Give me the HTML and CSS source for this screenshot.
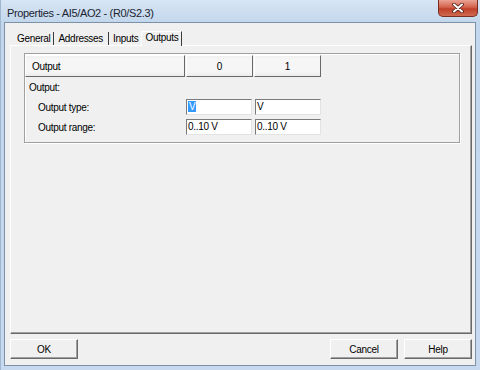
FILE: index.html
```html
<!DOCTYPE html>
<html lang="en">

<head>
  <meta charset="UTF-8">
  <title>Properties - AI5/AO2 - (R0/S2.3)</title>
  <link rel="stylesheet" href="styles.css">
</head>

<body>
  <div class="window">
    <div class="titlebar">
      <span class="title">Properties - AI5/AO2 - (R0/S2.3)</span>
      <button class="close" aria-label="Close">
        <svg width="12" height="10" viewBox="0 0 12 10">
          <path d="M2 1.5 L10 8.5 M10 1.5 L2 8.5" stroke="#4a1a12" stroke-width="3.6" stroke-linecap="round" />
          <path d="M2 1.5 L10 8.5 M10 1.5 L2 8.5" stroke="#fff" stroke-width="2" stroke-linecap="round" />
        </svg>
      </button>
    </div>

    <div class="client">
      <div class="tabs">
        <span class="tab">General</span>
        <span class="tab">Addresses</span>
        <span class="tab">Inputs</span>
        <span class="tab active">Outputs</span>
      </div>

      <div class="panel">
        <div class="group">
          <div class="head">
            <div class="hcell name">Output</div>
            <div class="hcell">0</div>
            <div class="hcell">1</div>
          </div>
          <div class="section">Output:</div>
          <div class="row">
            <span class="label">Output type:</span>
            <div class="field"><span class="selected">V</span></div>
            <div class="field">V</div>
          </div>
          <div class="row">
            <span class="label">Output range:</span>
            <div class="field">0..10 V</div>
            <div class="field">0..10 V</div>
          </div>
        </div>
      </div>

      <div class="buttons">
        <button class="btn">OK</button>
        <span class="spacer"></span>
        <button class="btn">Cancel</button>
        <button class="btn">Help</button>
      </div>
    </div>
  </div>
</body>

</html>
```

FILE: styles.css
```css
body {
  margin: 0;
  font-family: 'Liberation Sans', Arial, sans-serif;
  font-size: 10px;
  letter-spacing: -0.3px;
  color: #000;
}

/* window frame, aero style */
.window {
  width: 480px;
  height: 370px;
  box-sizing: border-box;
  display: flex;
  flex-direction: column;
  background: linear-gradient(to bottom, #d7e5f4 0px, #c3d7ec 22px, #c6d9ee 100%);
  border-left: 1px solid #9fb7d1;
}

.titlebar {
  height: 22px;
  display: flex;
  align-items: flex-start;
}

.title {
  font-size: 11px;
  letter-spacing: -0.35px;
  color: #1c2430;
  padding: 6px 0 0 6px;
  line-height: 14px;
}

.close {
  margin-left: auto;
  margin-right: 2px;
  width: 40px;
  height: 17px;
  padding: 0;
  border: 1px solid #7a2e22;
  border-top: none;
  border-radius: 0 0 5px 5px;
  background: linear-gradient(to bottom, #e9a394 0%, #d4624c 45%, #c0402a 55%, #cf6a50 100%);
  display: flex;
  align-items: center;
  justify-content: center;
}

.client {
  flex: 1;
  margin: 0 4px 4px 3px;
  border: 1px solid #7d92a8;
  background-color: #f0f0f0;
  display: flex;
  flex-direction: column;
  padding: 7px 3px 6px 5px;
}

/* tab strip */
.tabs {
  height: 15px;
  display: flex;
  align-items: flex-end;
  padding-left: 2px;
}

.tab {
  height: 13px;
  line-height: 13px;
  padding: 0 3px 0 5px;
  border-right: 1px solid #3c3c3c;
}

.tab:nth-child(2) {
  padding-left: 4px;
  padding-right: 5px;
}

.tab:nth-child(3) {
  border-right: none;
  padding-left: 4px;
  padding-right: 3px;
}

.tab.active {
  height: 15px;
  line-height: 12px;
  padding: 0 3px 0 3px;
  border-left: 1px solid #fff;
  border-top: 1px solid #fff;
  box-sizing: border-box;
  position: relative;
  top: 1px;
  background-color: #f0f0f0;
}

.panel {
  flex: 1;
  border-top: 1px solid #fff;
  border-left: 1px solid #fff;
  border-right: 1px solid #696969;
  border-bottom: 1px solid #696969;
  box-shadow: inset -1px -1px 0 #a0a0a0;
  padding: 7px 11px 0 13px;
}

/* group with the table */
.group {
  border: 1px solid #a0a0a0;
  box-shadow: inset 1px 1px 0 #fff, 1px 1px 0 #fff;
  padding: 1px 0 7px 0;
}

.head {
  display: flex;
  height: 22px;
}

.hcell {
  width: 67px;
  box-sizing: border-box;
  border-top: 1px solid #fff;
  border-left: 1px solid #fff;
  border-right: 1px solid #696969;
  border-bottom: 1px solid #696969;
  background: linear-gradient(to bottom, #f0f0f0 0px, #f6f6f6 3px, #f6f6f6 16px, #ececec 100%);
  display: flex;
  align-items: center;
  justify-content: center;
}

.hcell + .hcell {
  margin-left: 1px;
}

.hcell.name {
  width: 160px;
  justify-content: flex-start;
  padding-left: 6px;
}

.section {
  line-height: 12px;
  margin-top: 5px;
  padding-left: 4px;
}

.row {
  display: flex;
  align-items: center;
  margin-top: 5px;
}

.row + .row {
  margin-top: 4px;
}

.label {
  width: 161px;
  padding-left: 13px;
  box-sizing: border-box;
}

.field {
  width: 66px;
  height: 16px;
  box-sizing: border-box;
  margin-right: 2px;
  background-color: #fff;
  border-top: 1px solid #7a7a7a;
  border-left: 1px solid #7a7a7a;
  border-right: 1px solid #e3e3e3;
  border-bottom: 1px solid #e3e3e3;
  line-height: 14px;
  padding-left: 1px;
}

.field + .field {
  margin-left: 1px;
}

.selected {
  background-color: #3399ff;
  color: #fff;
  padding: 0 1px;
}

/* bottom buttons */
.buttons {
  display: flex;
  margin-top: 5px;
  height: 20px;
}

.spacer {
  flex: 1;
}

.btn {
  width: 68px;
  height: 20px;
  font: inherit;
  letter-spacing: inherit;
  color: #000;
  background-color: #f0f0f0;
  border-top: 1px solid #fff;
  border-left: 1px solid #fff;
  border-right: 1px solid #696969;
  border-bottom: 1px solid #696969;
  box-shadow: inset -1px -1px 0 #a0a0a0;
  padding: 0;
}

.btn + .btn {
  margin-left: 6px;
}
```
